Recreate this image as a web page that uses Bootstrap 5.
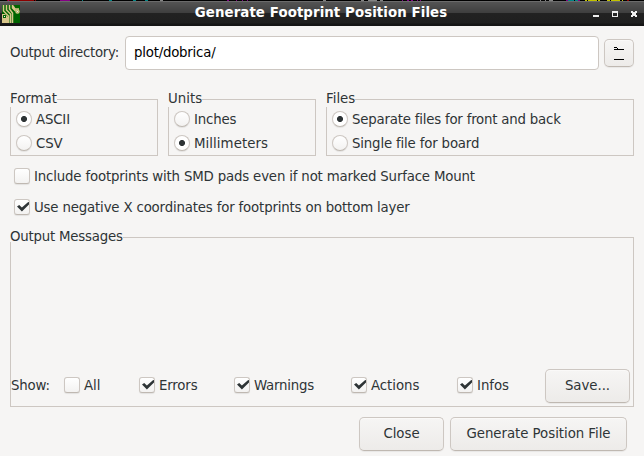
<!DOCTYPE html>
<html lang="en">
<head>
<meta charset="utf-8">
<meta name="viewport" content="width=device-width, initial-scale=1">
<title>Generate Footprint Position Files</title>
<link rel="stylesheet" href="https://cdn.jsdelivr.net/npm/bootstrap@5.3.0/dist/css/bootstrap.min.css">
<style>
  html, body { height: 100%; overflow: hidden; }
  body { background: #f6f5f4; color: #2e3436; font: 13.33px/16px "DejaVu Sans", sans-serif; }
  .desk-strip { height: 1px; background: #000; display: block; width: 100%; }
  .title-bar { height: 25px; padding: 0 5px 0 2px; color: #fff; letter-spacing: .09px; font-weight: 700; border-top: 1px solid #6b6b6b;
    background: linear-gradient(#545454 0, #3e3e3e 11px, #222 11px, #1f1f1f 21px, #151515 22px, #151515 100%); }
  .title-bar > span { margin: -2px 0 0 1px; }
  .title-side { width: 56px; }
  .dialog-body { padding: 10px 10px 0; }
  .path-label { width: 115px; letter-spacing: -.28px; }
  .path-input { width: 474px; height: 34px; padding: 0 8px 2px; border: 1px solid #cdc7c2; border-radius: 4px; color: #000; font-size: inherit; letter-spacing: -.22px; line-height: 16px; background: #fff; }
  .path-input:focus { box-shadow: none; }
  .tool-btn { --bs-btn-color: #2e3436; --bs-btn-hover-color: #2e3436; border: 1px solid #cdc7c2; border-bottom-color: #bfb8b1; border-radius: 5px; padding: 0;
    background: linear-gradient(#f6f5f4, #edebe9); height: 34px; font-size: inherit; letter-spacing: -.04px; line-height: 16px; box-shadow: inset 0 1px #faf9f8, 0 1px 1px rgba(0,0,0,.06); }
  .browse-btn { width: 30px; height: 28px; }
  .groups { gap: 10px; margin-top: 29px; }
  .group-frame { border: 1px solid #cdc7c2; height: 57px; }
  .group-narrow { width: 148px; }
  .group-title { margin: -10px 0 0 -1px; height: 14px; background: #f6f5f4; line-height: 17px; }
  .choice-list { padding-left: 5px; }
  .choice { height: 24px; display: flex; align-items: center; gap: 4px; white-space: nowrap; letter-spacing: -.05px; }
  .choice-text { padding-top: 1px; }
  .tight { letter-spacing: -.17px; }
  .tighter { letter-spacing: -.21px; }
  .loose { letter-spacing: .06px; }
  .choice .form-check-input { width: 16px; height: 16px; margin: 0; flex: none; border: 1px solid #cdc7c2; border-bottom-color: #bfb8b1;
    background-color: #fff; background-image: linear-gradient(#fff, #f3f2f1); box-shadow: 0 1px 1px rgba(0,0,0,.08); }
  .choice .form-check-input[type=checkbox] { border-radius: 3px; }
  .choice .form-check-input[type=radio]:checked { background-image: radial-gradient(circle, #2e3436 2.7px, transparent 3.3px); background-size: auto; }
  .tick-box { position: relative; display: flex; }
  .tick-box svg { position: absolute; left: 3px; top: 3px; }
  .choice .tick-box .form-check-input:checked { background-image: linear-gradient(#fff, #f3f2f1); }
  .messages { height: 170px; }
  .messages .choice { margin-top: -2px; }
</style>
<script src="https://cdn.jsdelivr.net/npm/bootstrap@5.3.0/dist/js/bootstrap.bundle.min.js"></script>
</head>
<body>
<svg width="0" height="0" class="position-absolute"><symbol id="tick" viewBox="0 0 13 10"><path d="M0 4.600 2.200 3l2.700 2.400L11.200 0 12 .2v2.300L4.900 9.600Z" fill="#2e3436"/></symbol></svg>
<svg class="desk-strip" viewBox="0 0 644 1" preserveAspectRatio="none" shape-rendering="crispEdges">
  <path fill="#8b0000" d="M7 0h27v1H7zM35 0h1v1h-1zM627 0h2v1h-2z"/>
  <path fill="#840084" d="M8 0h1v1H8zM60 0h10v1H60zM227 0h2v1h-2zM236 0h1v1h-1zM242 0h1v1h-1zM247 0h1v1h-1zM402 0h1v1h-1zM407 0h2v1h-2zM411 0h2v1h-2zM417 0h1v1h-1zM420 0h1v1h-1zM566 0h2v1h-2zM578 0h2v1h-2z"/>
  <path fill="#008484" d="M82 0h1v1h-1zM109 0h3v1h-3zM133 0h3v1h-3zM145 0h3v1h-3zM568 0h6v1h-6zM575 0h3v1h-3z"/>
  <path fill="#848484" d="M160 0h3v1h-3zM323 0h3v1h-3zM361 0h3v1h-3zM368 0h9v1h-9zM380 0h3v1h-3zM540 0h1v1h-1zM545 0h1v1h-1zM549 0h4v1h-4z"/>
  <path fill="#c2c200" d="M585 0h2v1h-2zM588 0h9v1h-9zM598 0h2v1h-2zM607 0h3v1h-3zM611 0h9v1h-9zM622 0h1v1h-1z"/>
</svg>
<header class="title-bar d-flex align-items-center justify-content-between">
  <div class="title-side d-flex">
    <svg width="18" height="18" viewBox="0 0 18 18"><path fill="#006400" d="M0 0h18v18H0z"/><path fill="#d8c68a" d="M0 9h3l3 3v6H0z"/><g fill="none" stroke="#d8c68a" stroke-width="1.500"><path d="M1.500 0v6l5 5v7M4.500 0v5l4 4v9M7.500 0v4l3 4v10M10.500 0v3l3 3M11 1l2 3h4"/><circle cx="15.500" cy="6.500" r="1.500"/></g><path d="M1 10h3v3H1z" fill="#006400"/><path d="M15 6h1v1h-1zM2 11h1v1H2z" fill="#eee"/></svg>
  </div>
  <span>Generate Footprint Position Files</span>
  <div class="title-side d-flex justify-content-end">
    <svg width="46" height="8" viewBox="0 0 46 8" shape-rendering="crispEdges" fill="#eee"><path d="M0 5h6v2H0zM19 1h6v6h-6zM38 1h2v1h2V1h2v2h-1v2h1v2h-2V6h-2v1h-2V5h1V3h-1z"/><path fill="#282828" d="M20 3h4v3h-4z"/></svg>
  </div>
</header>
<main class="dialog-body">
  <div class="d-flex align-items-center">
    <label for="dir" class="text-nowrap path-label">Output directory:</label>
    <input id="dir" class="form-control path-input" value="plot/dobrica/">
    <button class="btn tool-btn browse-btn ms-auto d-flex align-items-center justify-content-center" aria-label="Browse"><svg width="10" height="13" viewBox="0 0 10 13" shape-rendering="crispEdges"><path fill="#000" d="M0 2h10v1H0zM0 12h10v1H0zM0 0h3v1H0zM3 1h1v1H3z"/></svg></button>
  </div>
  <div class="d-flex groups">
    <fieldset class="group-frame group-narrow">
      <div class="group-title d-table">Format</div>
      <div class="choice-list">
        <label class="choice"><input type="radio" name="fmt" class="form-check-input" checked><span class="choice-text tight">ASCII</span></label>
        <label class="choice"><input type="radio" name="fmt" class="form-check-input"><span class="choice-text tight">CSV</span></label>
      </div>
    </fieldset>
    <fieldset class="group-frame group-narrow">
      <div class="group-title d-table">Units</div>
      <div class="choice-list">
        <label class="choice"><input type="radio" name="units" class="form-check-input"><span class="choice-text tight">Inches</span></label>
        <label class="choice"><input type="radio" name="units" class="form-check-input" checked><span class="choice-text loose">Millimeters</span></label>
      </div>
    </fieldset>
    <fieldset class="group-frame flex-grow-1">
      <div class="group-title d-table">Files</div>
      <div class="choice-list">
        <label class="choice"><input type="radio" name="files" class="form-check-input" checked><span class="choice-text tighter">Separate files for front and back</span></label>
        <label class="choice"><input type="radio" name="files" class="form-check-input"><span class="choice-text tight">Single file for board</span></label>
      </div>
    </fieldset>
  </div>
  <div class="ps-1 pt-2">
    <label class="choice"><input type="checkbox" class="form-check-input"><span class="choice-text tight">Include footprints with SMD pads even if not marked Surface Mount</span></label>
    <label class="choice" style="margin-top:7px"><span class="tick-box"><input type="checkbox" class="form-check-input" checked><svg width="13" height="10"><use href="#tick"/></svg></span><span class="choice-text tight">Use negative X coordinates for footprints on bottom layer</span></label>
  </div>
  <fieldset class="group-frame messages d-flex flex-column" style="margin-top:18px">
    <div class="group-title align-self-start tighter">Output Messages</div>
    <div class="d-flex align-items-center mt-auto" style="padding:0 3px 3px 0">
      <span class="tight" style="width:53px">Show:</span>
      <label class="choice" style="width:75px"><input type="checkbox" class="form-check-input"><span class="choice-text">All</span></label>
      <label class="choice" style="width:95px"><span class="tick-box"><input type="checkbox" class="form-check-input" checked><svg width="13" height="10"><use href="#tick"/></svg></span><span class="choice-text tight">Errors</span></label>
      <label class="choice" style="width:117px"><span class="tick-box"><input type="checkbox" class="form-check-input" checked><svg width="13" height="10"><use href="#tick"/></svg></span><span class="choice-text tighter">Warnings</span></label>
      <label class="choice" style="width:106px"><span class="tick-box"><input type="checkbox" class="form-check-input" checked><svg width="13" height="10"><use href="#tick"/></svg></span><span class="choice-text">Actions</span></label>
      <label class="choice"><span class="tick-box"><input type="checkbox" class="form-check-input" checked><svg width="13" height="10"><use href="#tick"/></svg></span><span class="choice-text">Infos</span></label>
      <button class="btn tool-btn ms-auto" style="width:85px">Save...</button>
    </div>
  </fieldset>
  <div class="d-flex justify-content-end" style="gap:6px;margin-top:10px;padding-right:7px">
    <button class="btn tool-btn" style="width:85px">Close</button>
    <button class="btn tool-btn" style="width:177px">Generate Position File</button>
  </div>
</main>
</body>
</html>
